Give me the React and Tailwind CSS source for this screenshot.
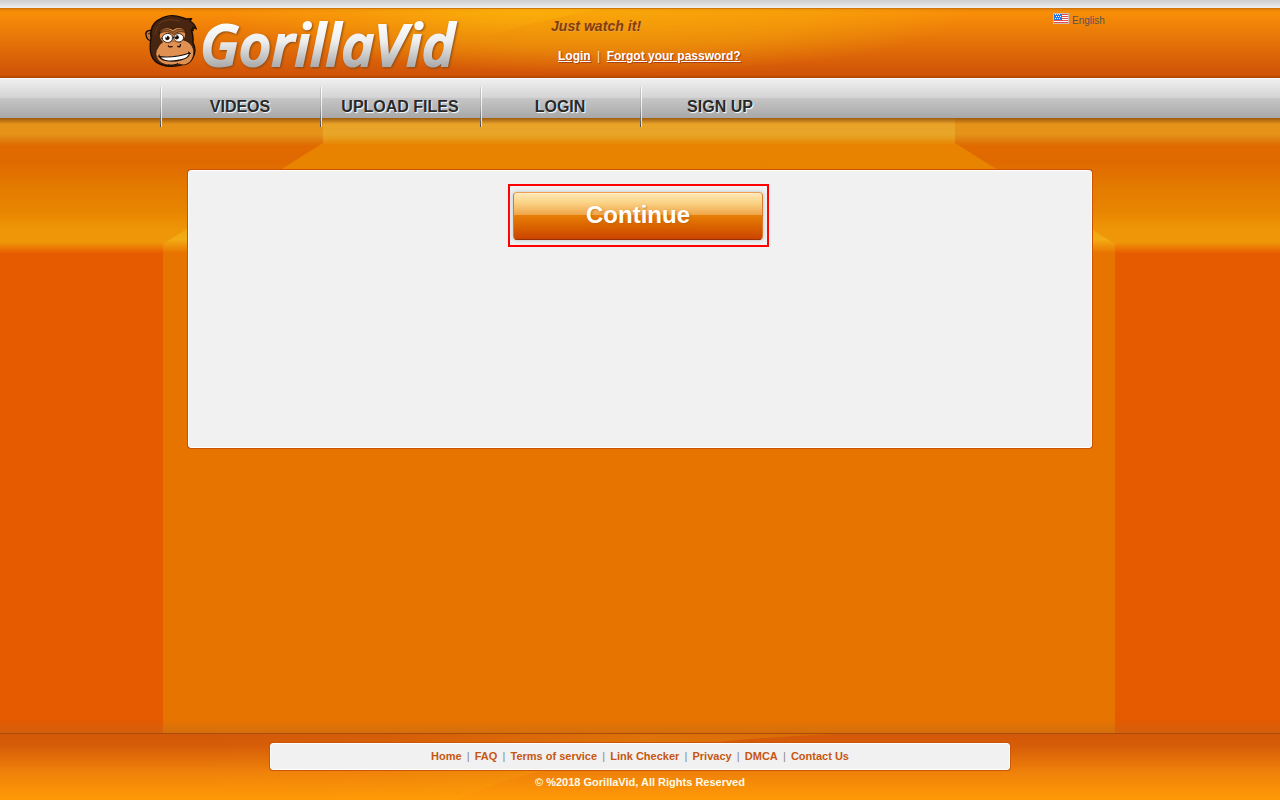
import React from "react";

function Gorilla() {
  return (
    <svg viewBox="0 3 165 171" className="h-[57px] w-[55px] shrink-0" aria-hidden="true">
      <g stroke="#170b05" strokeLinejoin="round" strokeLinecap="round">
        <path d="M32 62C20 54 6 60 9 72c2 12 10 19 23 17z" fill="#c9793c" strokeWidth="4" />
        <path d="M16 69c5-5 9-2 11 6" fill="none" strokeWidth="3" />
        <path d="M24 80c-4-24 6-46 26-55 20-12 46-13 66-6l14 5 16-1-5 7c9 5 15 13 19 24l-11-5 2 10-6-2c5 12 6 24 5 38 7 14 7 32 0 44-6 12-14 19-26 20-16 8-38 8-54 6-18-3-32-9-40-22-9-14-10-40-6-63z" fill="#472510" strokeWidth="4" />
        <path d="M50 65c6-15 24-19 40-9 14-12 34-7 38 9 2 10-3 16-7 22 17 4 28 15 31 31 2 20-7 35-20 41-9 5-18 2-24 0-22 8-52 4-64-14-8-12-7-24 0-34 4-8 8-13 15-18-9-7-12-17-9-28z" fill="#e09050" stroke="#2a1408" strokeWidth="2.5" />
        <path d="M51 67c6-14 23-15 34-7l5 3 6-4c11-8 25-6 31 6-9-4-19-4-29 2l-6 4-6-4c-11-7-25-6-35 0z" fill="#a05c2a" strokeWidth="1.5" />
        <path d="M57 82c0-13 21-21 30-8 3 7 1 17-6 19-10 4-21-1-24-11zM92 80c2-14 22-17 29-4 2 8-2 15-11 17-8 2-17-3-18-13z" fill="#fff" strokeWidth="2.5" />
        <circle cx="73" cy="81" r="6" fill="#170b05" />
        <circle cx="101" cy="79" r="6" fill="#170b05" />
        <path d="M76 97c4-8 32-10 38-1" fill="none" stroke="#8a4a1f" strokeWidth="2" />
        <path d="M76 105c4 6 8 1 11 2m17-1c5 4 9 0 8-5" fill="none" strokeWidth="4" />
        <path d="M48 137c24 2 64-1 92-11-2 10-10 17-24 20-26 7-56 7-68-9z" fill="#fff" strokeWidth="3.5" />
        <path d="M45 136l5-4m86-9l6 4M76 162c10 2 22 0 28-4" fill="none" strokeWidth="3" />
      </g>
      <path d="M48 38c16-13 42-15 62-7M36 70c2-14 7-21 13-27" fill="none" stroke="#6b3a1c" strokeWidth="3" />
      <circle cx="70" cy="77" r="2.5" fill="#fff" />
      <circle cx="98" cy="75" r="2.5" fill="#fff" />
    </svg>
  );
}

function Logo() {
  return (
    <a href="#" className="ml-[143px] mt-[4px] flex h-[66px] w-[320px]" aria-label="GorillaVid">
      <Gorilla />
      <svg className="h-[66px] w-[265px] shrink-0 overflow-visible" viewBox="198 12 265 66">
        <defs>
          <linearGradient id="silver" gradientUnits="userSpaceOnUse" x1="0" y1="20" x2="0" y2="67">
            <stop offset="0" stopColor="#fff" />
            <stop offset=".45" stopColor="#eee" />
            <stop offset="1" stopColor="#aaa" />
          </linearGradient>
        </defs>
        <text x="200" y="65.5" textLength="255" lengthAdjust="spacingAndGlyphs" fill="url(#silver)" stroke="url(#silver)" strokeWidth="2"
          className="font-['Open_Sans',sans-serif] text-[58px] font-semibold italic [filter:drop-shadow(1px_1px_1px_#8b4a13)]">GorillaVid</text>
      </svg>
    </a>
  );
}

function Flag() {
  return (
    <svg className="h-[11px] w-[16px]" viewBox="0 0 16 11" shapeRendering="crispEdges">
      <path fill="#fff" d="M0 0h16v11H0z" />
      <path fill="#e34b4b" d="M9 1h6v1H9zM9 3h6v1H9zM9 5h6v1H9zM1 7h14v1H1zM1 9h14v1H1z" />
      <path fill="#2877e8" d="M1 1h8v6H1z" />
      <path fill="#fff" d="M2 1h1v1H2zM4 1h1v1H4zM6 1h1v1H6zM3 3h1v1H3zM5 3h1v1H5zM7 3h1v1H7zM2 5h1v1H2zM4 5h1v1H4zM6 5h1v1H6z" />
      <path fill="none" stroke="#b9a39a" strokeOpacity=".7" d="M.5 .5h15v10H.5z" />
    </svg>
  );
}

function Header() {
  return (
    <header className="relative isolate h-[78px] bg-[linear-gradient(180deg,#d0d0d0_0px,#d8d8d8_3px,#f0f0f0_8px,#c87008_8px,#ee8709_10px,#f98e08_13px,#e87808_36px,#d75c08_65px,#d05308_75px,#a84400_78px)]">
      <svg className="absolute left-0 top-[9px] -z-10 h-[67px] w-full" viewBox="0 9 1280 67" preserveAspectRatio="none">
        <defs>
          <radialGradient id="glow" gradientUnits="userSpaceOnUse" cx="0" cy="0" r="1" gradientTransform="translate(600 8) scale(370 66)">
            <stop offset="0" stopColor="#f9b40a" stopOpacity=".62" />
            <stop offset=".6" stopColor="#f7b30b" stopOpacity=".4" />
            <stop offset="1" stopColor="#f7b30b" stopOpacity="0" />
          </radialGradient>
          <radialGradient id="flare" gradientUnits="userSpaceOnUse" cx="0" cy="0" r="1" gradientTransform="translate(525 10) scale(150 28)">
            <stop offset="0" stopColor="#ffbe0a" stopOpacity=".4" />
            <stop offset="1" stopColor="#ffbe0a" stopOpacity="0" />
          </radialGradient>
        </defs>
        <path d="M200 9h800v67H200z" fill="url(#glow)" />
        <path d="M370 9h235Q540 18 455 46h-85z" fill="url(#flare)" />
      </svg>
      <div className="flex h-full pt-[8px]">
        <Logo />
        <div className="ml-[88px] w-[300px] pt-[9px] font-bold">
          <p className="text-[14px] leading-[18px] italic tracking-[.05px] text-[#843d06] [text-shadow:1px_1px_0_#e8a040]">Just watch it!</p>
          <nav className="mt-[13px] flex pl-[7px] text-[12px] leading-[16px] text-white [text-shadow:1px_1px_1px_#a84010]">
            <a href="#" className="underline">Login</a>
            <span className="w-[16px] text-center font-normal text-[#ffe0b8]">|</span>
            <a href="#" className="underline">Forgot your password?</a>
          </nav>
        </div>
        <div className="ml-[202px] flex items-start gap-[3px] pt-[5px] text-[10px] text-[#555]">
          <Flag />
          <span className="pt-[2px] leading-[12px]">English</span>
        </div>
      </div>
    </header>
  );
}

function NavBar() {
  return (
    <nav className="relative z-10 h-[40px] bg-[linear-gradient(180deg,#fff_0px,#f0f0f0_1px,#d5d5d5_19px,#d2d2d2_20px,#c6c6c6_20px,#a8a8a8_40px)] pl-[160px] pt-[9px]">
      <div className="flex">
        {["VIDEOS", "UPLOAD FILES", "LOGIN", "SIGN UP"].map((t) => (
          <div key={t} className="flex h-[40px] w-[160px]">
            <i className="w-px bg-[linear-gradient(180deg,#ccc,#aaa_50%,#444d55)]" />
            <i className="w-px bg-[linear-gradient(180deg,#fff,#ddd)]" />
            <a href="#" className="w-[158px] pr-[2px] text-center text-[16px] font-bold leading-[39px] text-[#292929] [text-shadow:1px_1px_1px_#fff]">{t}</a>
          </div>
        ))}
      </div>
    </nav>
  );
}

function Backdrop() {
  return (
    <svg className="absolute inset-0 -z-10 h-full w-full" viewBox="0 118 1280 615" preserveAspectRatio="none">
      <defs>
        <linearGradient id="center" gradientUnits="userSpaceOnUse" x1="0" y1="118" x2="0" y2="253">
          <stop offset="0" stopColor="#e8a028" />
          <stop offset=".12" stopColor="#e8a628" />
          <stop offset=".155" stopColor="#e69a18" />
          <stop offset=".2" stopColor="#e88200" />
          <stop offset=".5" stopColor="#e88600" />
          <stop offset=".8" stopColor="#f0a50c" />
          <stop offset=".9" stopColor="#f3ac14" />
          <stop offset="1" stopColor="#e87400" />
        </linearGradient>
      </defs>
      <path d="M323 118H955V143L1115 244V733H163V244L323 143Z" fill="url(#center)" />
    </svg>
  );
}

function ContinueButton() {
  return (
    <div className="flex h-[63px] w-[261px] border-2 border-[#f00] pl-[3px] pt-[6px]">
      <button className="h-[48px] w-[250px] rounded-[4px] border border-x-[#d67b32] border-b-[#983000] border-t-[#f09d4e] bg-[linear-gradient(180deg,#ffe9b8_0px,#fbd58a_9px,#efa548_22px,#e88006_22px,#db6400_33px,#cc4400_46px)] pb-[2px] text-[24px] font-bold leading-[44px] text-white shadow-[inset_0_1px_0_#ffefd0,0_0_5px_#bbc4cc] [text-shadow:1px_1px_2px_#b35a1099]">Continue</button>
    </div>
  );
}

function Footer() {
  const links = ["Home", "FAQ", "Terms of service", "Link Checker", "Privacy", "DMCA", "Contact Us"];
  return (
    <footer className="relative isolate flex h-[67px] flex-col items-center border-t border-[#a94a08] bg-[linear-gradient(180deg,#d35808_0px,#d65d08_12px,#ee800a_37px,#ff9806_64px)] pt-[9px]">
      <svg className="absolute inset-0 -z-10 h-full w-full" viewBox="0 734 1280 66" preserveAspectRatio="none">
        <defs>
          <linearGradient id="sweep">
            <stop offset="0" stopColor="#f7b30b" stopOpacity="0" />
            <stop offset=".3" stopColor="#f7b30b" stopOpacity=".05" />
            <stop offset=".7" stopColor="#f7b30b" stopOpacity=".28" />
            <stop offset="1" stopColor="#f7b30b" stopOpacity=".2" />
          </linearGradient>
        </defs>
        <path d="M835 734C690 740 540 760 457 800H200V734Z" fill="url(#sweep)" />
      </svg>
      <nav className="flex h-[27px] w-[740px] justify-center rounded-[3px] border border-[#fff] bg-[#f1f1f1] text-[11px] leading-[25px] shadow-[0_0_0_1px_#c95708]">
        {links.map((t, i) => (
          <React.Fragment key={t}>
            {i > 0 && <span className="w-[13.15px] text-center text-[#888]">|</span>}
            <a href="#" className="font-bold text-[#c75710]">{t}</a>
          </React.Fragment>
        ))}
      </nav>
      <p className="mt-[5px] text-[11px] font-bold leading-[14px] text-[#fffbe6]">© %2018 GorillaVid, All Rights Reserved</p>
    </footer>
  );
}

export default function App() {
  return (
    <div className="flex h-[800px] w-[1280px] flex-col overflow-hidden font-['Liberation_Sans',Arial,sans-serif]">
      <Header />
      <NavBar />
      <main className="relative isolate h-[615px] bg-[linear-gradient(180deg,#e39018_0px,#e59418_16px,#e28512_20px,#e06a00_28px,#e06800_42px,#e47b00_70px,#e88600_95px,#ee9508_111px,#ef9708_124px,#e65a00_136px)] px-[188px] pt-[52px]">
        <Backdrop />
        <div className="absolute inset-x-0 top-0 h-[6px] bg-[linear-gradient(180deg,#8b4c0ccc,#8b4c0c00)]" />
        <div className="absolute inset-x-0 bottom-0 h-[14px] bg-[linear-gradient(180deg,#b8682000,#b8682066)]" />
        <section className="flex h-[278px] w-[904px] justify-center rounded-[3px] border border-white bg-[#f1f1f1] pr-[3px] pt-[13px] shadow-[0_0_0_1px_#cc5200]">
          <ContinueButton />
        </section>
      </main>
      <Footer />
    </div>
  );
}
